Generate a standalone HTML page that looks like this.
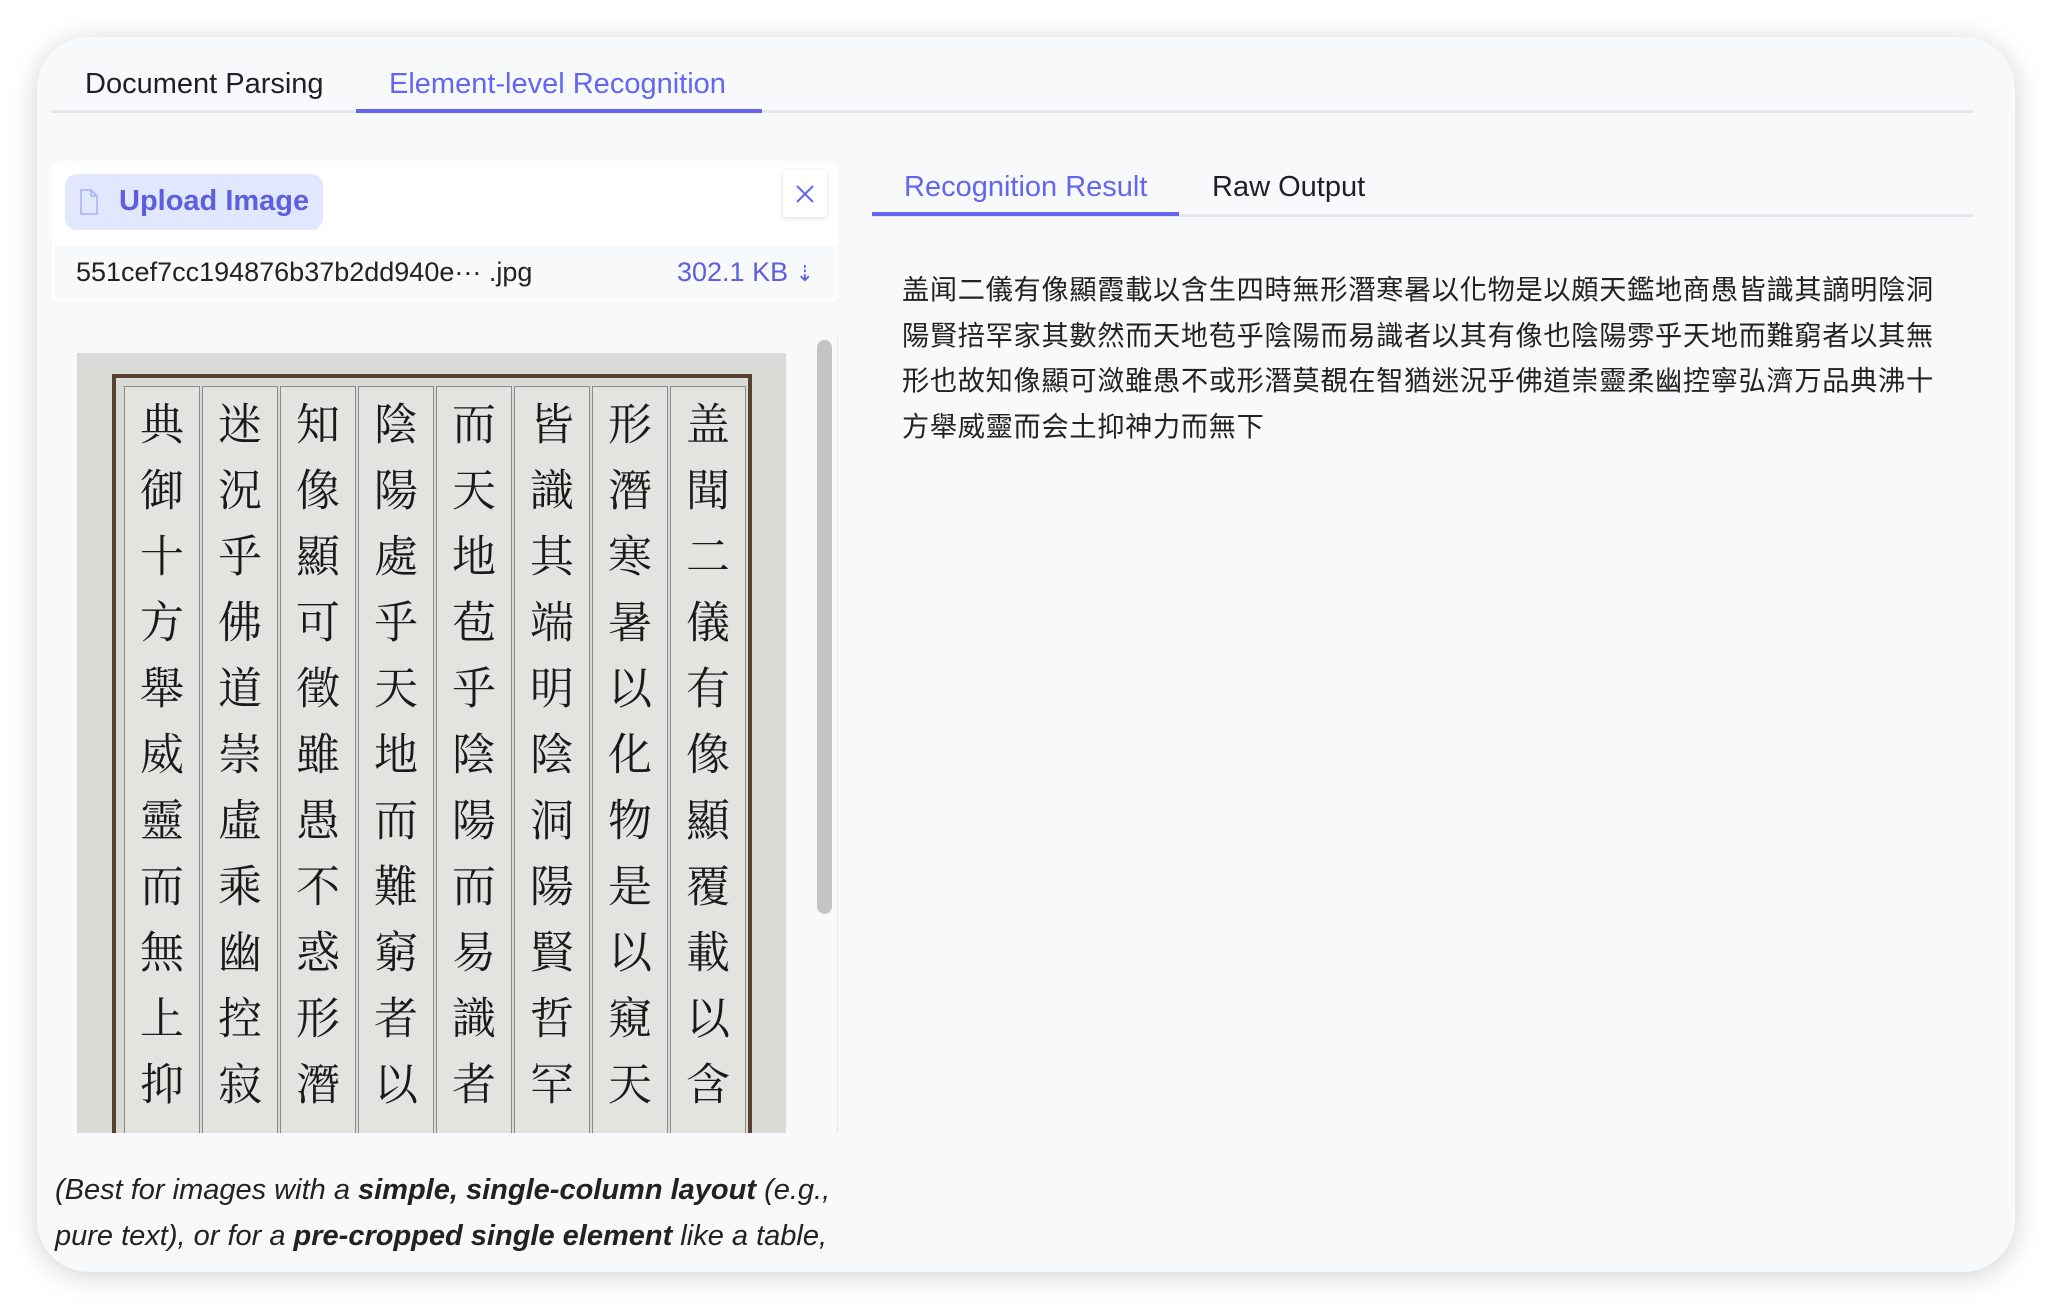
<!DOCTYPE html>
<html><head><meta charset="utf-8"><style>
*{box-sizing:border-box;margin:0;padding:0}
body{width:2052px;height:1310px;background:#fff;font-family:"Liberation Sans","Noto Sans CJK SC",sans-serif;position:relative;overflow:hidden}
.card{position:absolute;left:37px;top:37px;width:1978px;height:1235px;background:#f8f9fb;border-radius:52px;box-shadow:0 4px 28px rgba(0,0,0,0.18);overflow:hidden}
.abs{position:absolute}
.tab{position:absolute;font-size:29px;color:#1f1f24;white-space:nowrap}
.act{color:#6366f1}
.line{position:absolute;height:3px;background:#e5e7eb}
.ul{position:absolute;height:4px;background:#6366f1}
.cols{position:absolute;display:flex;flex-direction:row-reverse;gap:2px;width:626px;overflow:hidden}
.col{width:76px;height:100%;background:#e3e4e0;border:1px solid #8a8a88;border-bottom:none;writing-mode:vertical-rl;font-family:"Noto Serif CJK SC","WenQuanYi Zen Hei",serif;font-size:44px;letter-spacing:22px;color:#1a1a1a;padding-top:14px;text-align:start;line-height:74px;overflow:hidden}
</style></head><body>
<div class="card">
  <div class="tab" style="left:48px;top:31px">Document Parsing</div>
  <div class="tab act" style="left:352px;top:31px">Element-level Recognition</div>
  <div class="line" style="left:15px;top:73px;width:1921px"></div>
  <div class="ul" style="left:319px;top:72px;width:406px"></div>

  <div class="abs" style="left:15px;top:124px;width:786px;height:141px;background:#fff;border-radius:8px"></div>
  <div class="abs" style="left:28px;top:137px;width:258px;height:56px;background:#e0e7ff;border-radius:12px"></div>
  <svg class="abs" style="left:42px;top:152px" width="20" height="26" viewBox="0 0 20 26"><path d="M2 1h10l6 6v18H2z M12 1v6h6" fill="none" stroke="#a5b4fc" stroke-width="1.6"/></svg>
  <div class="abs" style="left:82px;top:148px;font-size:29px;font-weight:bold;color:#5b5fe0">Upload Image</div>
  <div class="abs" style="left:746px;top:133px;width:44px;height:47px;background:#fff;border-radius:4px;box-shadow:0 1px 4px rgba(0,0,0,0.15)"></div>
  <svg class="abs" style="left:757px;top:146px" width="22" height="22" viewBox="0 0 22 22"><path d="M3 3L19 19M19 3L3 19" stroke="#6366f1" stroke-width="2"/></svg>
  <div class="abs" style="left:18px;top:208px;width:780px;height:53px;background:#f8f9fb"></div>
  <div class="abs" style="left:39px;top:220px;font-size:27px;color:#222">551cef7cc194876b37b2dd940e··· .jpg</div>
  <div class="abs" style="left:640px;top:220px;font-size:27px;color:#5b5fe0">302.1 KB <span style="font-size:22px">⇣</span></div>

  <div class="abs" style="left:40px;top:316px;width:709px;height:780px;background:#d9dbd6;overflow:hidden">
    <div class="abs" style="left:35px;top:21px;width:640px;height:800px;border:4px solid #5a4030;border-bottom:none"></div>
  </div>
  <div class="cols" style="left:83px;top:349px;height:747px">
    <div class="col">盖聞二儀有像顯覆載以含</div>
    <div class="col">形潛寒暑以化物是以窺天鑑</div>
    <div class="col">皆識其端明陰洞陽賢哲罕</div>
    <div class="col">而天地苞乎陰陽而易識者以其</div>
    <div class="col">陰陽處乎天地而難窮者以其</div>
    <div class="col">知像顯可徵雖愚不惑形潛莫覩</div>
    <div class="col">迷況乎佛道崇虛乘幽控寂</div>
    <div class="col">典御十方舉威靈而無上抑神</div>
  </div>
  <div class="abs" style="left:780px;top:303px;width:15px;height:574px;background:#c4c4c6;border-radius:8px"></div>
  <div class="abs" style="left:800px;top:300px;width:1px;height:796px;background:#e5e7eb"></div>

  <div class="abs" style="left:18px;top:1130px;font-size:29px;font-style:italic;color:#222;line-height:46px;white-space:nowrap">(Best for images with a <b>simple, single-column layout</b> (e.g.,<br>pure text), or for a <b>pre-cropped single element</b> like a table,</div>

  <div class="tab act" style="left:867px;top:134px;font-size:29px">Recognition Result</div>
  <div class="tab" style="left:1175px;top:134px;font-size:29px">Raw Output</div>
  <div class="line" style="left:835px;top:177px;width:1101px"></div>
  <div class="ul" style="left:835px;top:175px;width:307px"></div>

  <div class="abs" style="left:865px;top:228px;white-space:nowrap;font-family:'Noto Sans CJK TC','Noto Sans CJK SC',sans-serif;font-size:27.2px;letter-spacing:0.7px;line-height:45.7px;color:#222">盖闻二儀有像顯霞載以含生四時無形潛寒暑以化物是以頗天鑑地商愚皆識其謫明陰洞<br>陽賢掊罕家其數然而天地苞乎陰陽而易識者以其有像也陰陽雰乎天地而難窮者以其無<br>形也故知像顯可潋雖愚不或形潛莫覩在智猶迷況乎佛道崇靈柔幽控寧弘濟万品典沸十<br>方舉威靈而会土抑神力而無下</div>
</div>
</body></html>
